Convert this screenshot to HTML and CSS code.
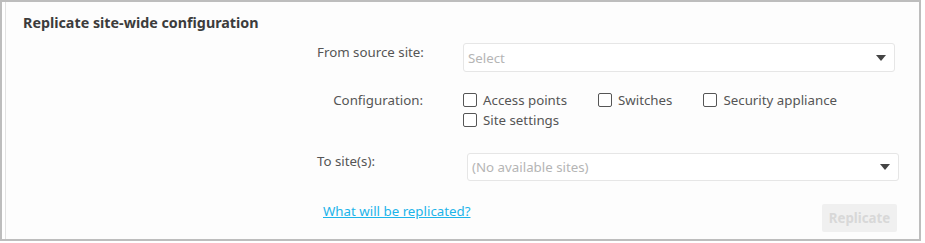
FILE: index.html
```html
<!DOCTYPE html>
<html lang="en">
<head>
    <meta charset="UTF-8">
    <title>Replicate site-wide configuration</title>
    <link rel="stylesheet" href="styles.css">
</head>
<body>
    <div class="frame">
        <div class="card">
            <h2 class="card-title">Replicate site-wide configuration</h2>

            <div class="form">
                <div class="form-row">
                    <label class="form-label">From source site:</label>
                    <div class="select">
                        <span class="select-text">Select</span>
                        <span class="caret"></span>
                    </div>
                </div>

                <div class="form-row row-config">
                    <label class="form-label">Configuration:</label>
                    <div class="checks">
                        <label class="check"><span class="box"></span>Access points</label>
                        <label class="check"><span class="box"></span>Switches</label>
                        <label class="check"><span class="box"></span>Security appliance</label>
                        <label class="check"><span class="box"></span>Site settings</label>
                    </div>
                </div>

                <div class="form-row row-to">
                    <label class="form-label label-left">To site(s):</label>
                    <div class="select select-to">
                        <span class="select-text">(No available sites)</span>
                        <span class="caret"></span>
                    </div>
                </div>

                <div class="form-footer">
                    <a href="#" class="help-link">What will be replicated?</a>
                    <button type="button" class="replicate-btn" disabled>Replicate</button>
                </div>
            </div>
        </div>
    </div>
</body>
</html>
```

FILE: styles.css
```css
/* Page */
body {
    margin: 0;
    background: #fff;
    font-family: 'Noto Sans', 'Lato', sans-serif;
    color: #444;
}

/* Outer frame */
.frame {
    width: 917px;
    height: 237px;
    border: 2px solid #bdbdbd;
    background: #fff;
}

.card {
    height: 100%;
    margin-left: 3px;
    border-left: 1px solid #e2e2e2;
    background: #fdfdfd;
    box-sizing: border-box;
    padding: 11px 0 0 17px;
}

.card-title {
    margin: 0;
    font-size: 14.3px;
    font-weight: bold;
    color: #3c3c3c;
    line-height: 19px;
}

/* Form */
.form {
    margin-left: 294px;
    margin-top: 11px;
    width: 578px;
}

.form-row {
    display: flex;
}

.form-label {
    width: 106px;
    text-align: right;
    font-size: 13.3px;
    color: #555;
    padding-top: 1px;
    flex-shrink: 0;
    line-height: 17px;
    white-space: nowrap;
}

.label-left {
    text-align: left;
    width: 110px;
    padding-top: 0;
}

.select {
    margin-left: 40px;
    flex: 1;
    height: 29px;
    border: 1px solid #e6e6e6;
    border-radius: 3px;
    background: #fff;
    box-sizing: border-box;
    display: flex;
    align-items: center;
    justify-content: space-between;
    padding: 0 8px 0 4px;
}

.select-to {
    height: 28px;
    margin-left: 40px;
    margin-right: -4px;
}

.select-text {
    font-size: 13.3px;
    color: #b5b5b5;
}

.caret {
    width: 0;
    height: 0;
    border-left: 5px solid transparent;
    border-right: 5px solid transparent;
    border-top: 6px solid #444;
}

.row-config {
    margin-top: 19px;
}

.checks {
    margin-left: 40px;
    display: flex;
    flex-wrap: wrap;
    width: 420px;
    row-gap: 6px;
    padding-top: 2px;
}

.check {
    display: flex;
    align-items: center;
    font-size: 13.3px;
    color: #555;
    margin-right: 31px;
    line-height: 14px;
}

.check:last-child {
    margin-right: 0;
}

.box {
    width: 12px;
    height: 12px;
    border: 1px solid #555;
    border-radius: 2px;
    margin-right: 6px;
    background: #fff;
}

.row-to {
    margin-top: 26px;
}

.form-footer {
    display: flex;
    justify-content: space-between;
    align-items: flex-start;
    margin-top: 23px;
    padding-left: 6px;
    margin-right: -2px;
}

.help-link {
    font-size: 13.3px;
    color: #1cb4ea;
    text-decoration: underline;
    margin-top: -2px;
}

.replicate-btn {
    width: 75px;
    height: 28px;
    border: none;
    border-radius: 2px;
    background: #f0f0f0;
    color: #d8d8d8;
    font-family: inherit;
    font-size: 13.3px;
    font-weight: bold;
}
```
